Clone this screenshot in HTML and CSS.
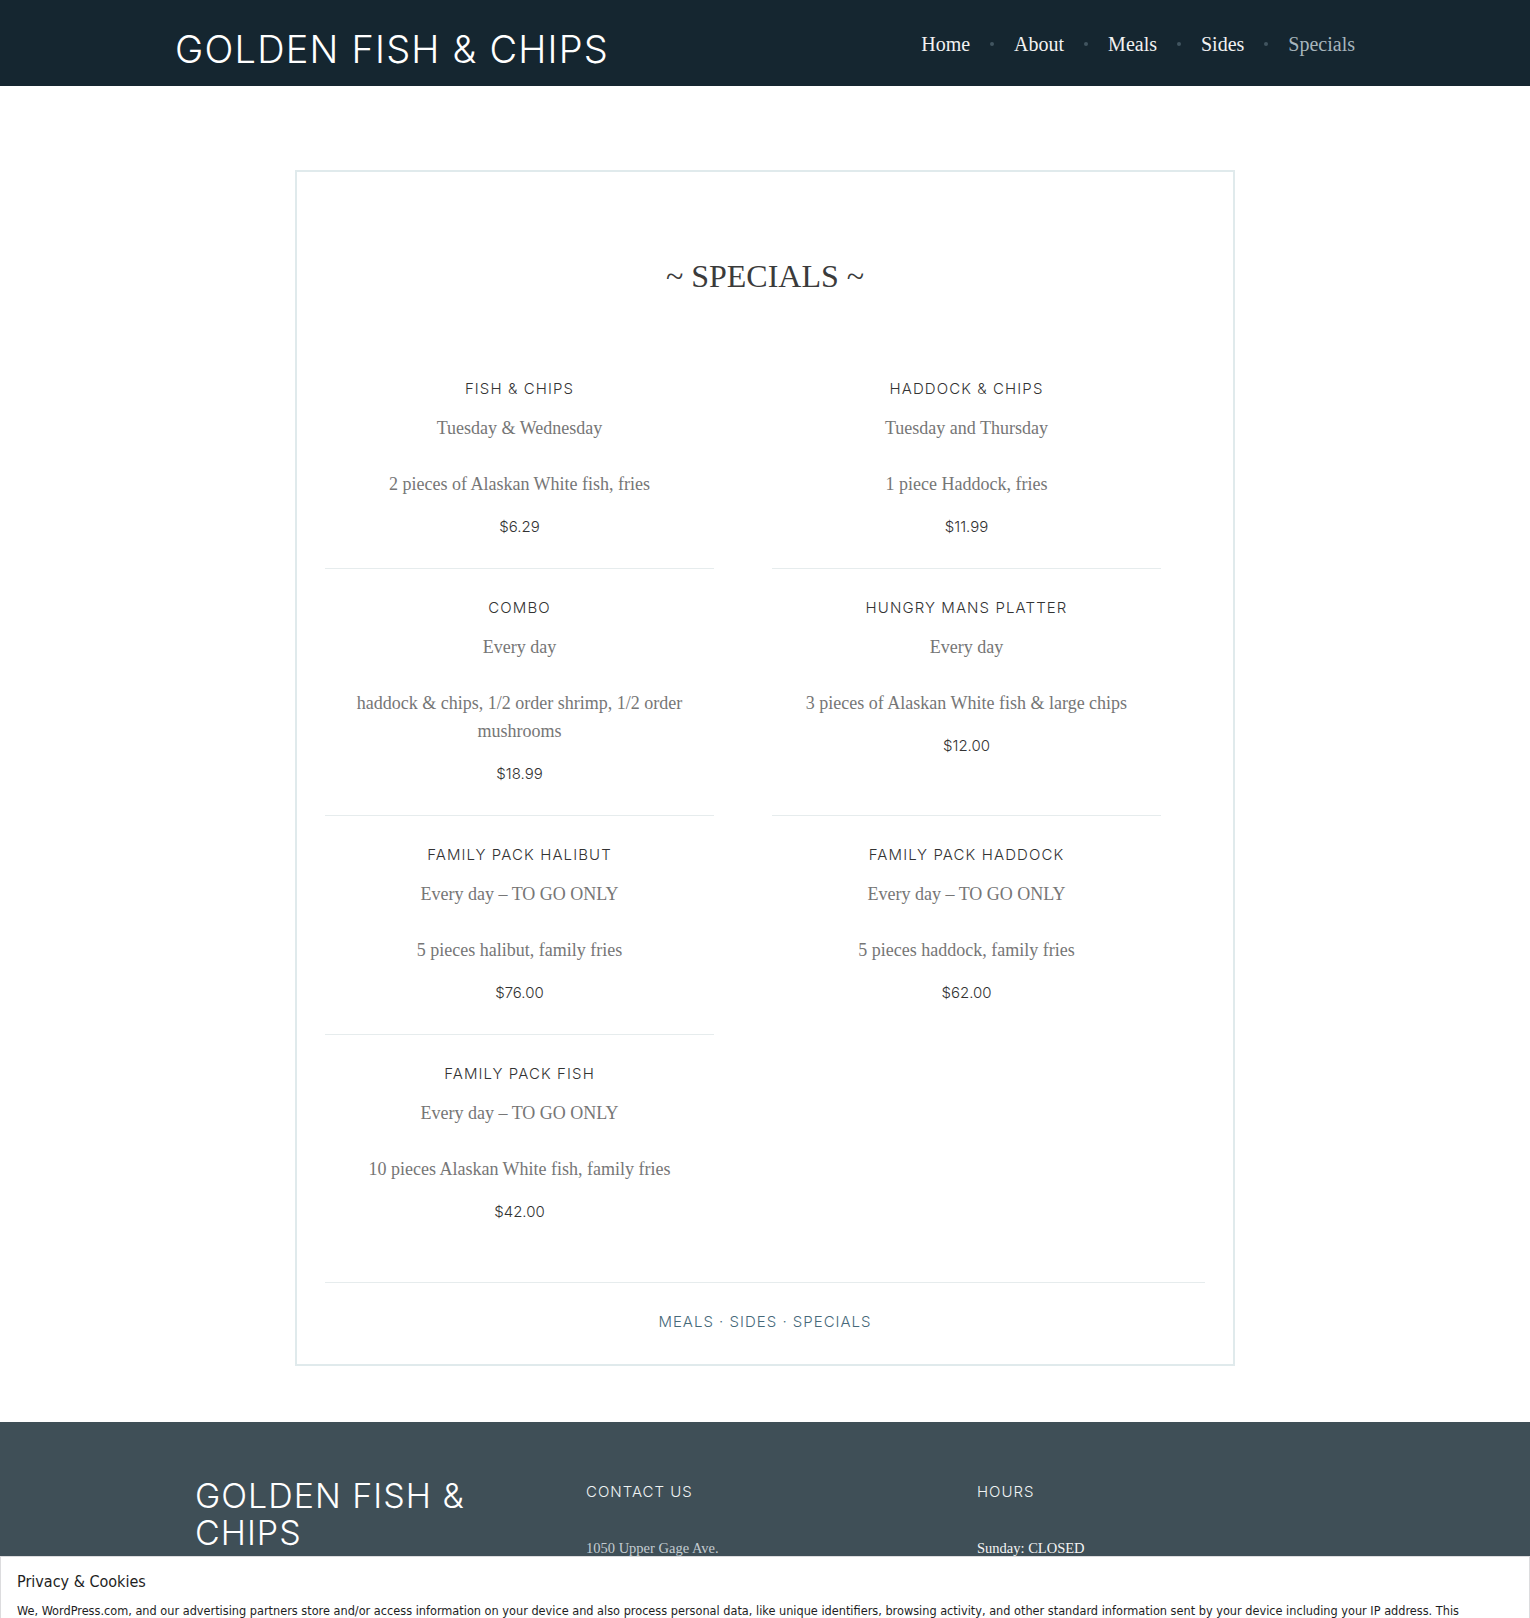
FILE: index.html
```html
<!DOCTYPE html>
<html lang="en">
<head>
<meta charset="utf-8">
<title>Specials – Golden Fish &amp; Chips</title>
<link rel="stylesheet" href="styles.css">
</head>
<body>
<header class="site-header">
  <div class="header-inner">
    <a class="site-title" href="#">GOLDEN FISH &amp; CHIPS</a>
    <nav class="main-nav">
      <ul class="nav-list">
        <li><a href="#">Home</a></li>
        <li class="sep" aria-hidden="true"></li>
        <li><a href="#">About</a></li>
        <li class="sep" aria-hidden="true"></li>
        <li><a href="#">Meals</a></li>
        <li class="sep" aria-hidden="true"></li>
        <li><a href="#">Sides</a></li>
        <li class="sep" aria-hidden="true"></li>
        <li><a class="current" href="#">Specials</a></li>
      </ul>
    </nav>
  </div>
</header>

<main class="content">
  <article class="card">
    <h1 class="entry-title">~ SPECIALS ~</h1>
    <div class="menu-grid">
      <div class="item">
        <h3 class="item-name">FISH &amp; CHIPS</h3>
        <p class="item-days">Tuesday &amp; Wednesday</p>
        <p class="item-desc">2 pieces of Alaskan White fish, fries</p>
        <p class="item-price">$6.29</p>
      </div>
      <div class="item">
        <h3 class="item-name">HADDOCK &amp; CHIPS</h3>
        <p class="item-days">Tuesday and Thursday</p>
        <p class="item-desc">1 piece Haddock, fries</p>
        <p class="item-price">$11.99</p>
      </div>
      <div class="item">
        <h3 class="item-name">COMBO</h3>
        <p class="item-days">Every day</p>
        <p class="item-desc">haddock &amp; chips, 1/2 order shrimp, 1/2 order mushrooms</p>
        <p class="item-price">$18.99</p>
      </div>
      <div class="item">
        <h3 class="item-name">HUNGRY MANS PLATTER</h3>
        <p class="item-days">Every day</p>
        <p class="item-desc">3 pieces of Alaskan White fish &amp; large chips</p>
        <p class="item-price">$12.00</p>
      </div>
      <div class="item">
        <h3 class="item-name">FAMILY PACK HALIBUT</h3>
        <p class="item-days">Every day – TO GO ONLY</p>
        <p class="item-desc">5 pieces halibut, family fries</p>
        <p class="item-price">$76.00</p>
      </div>
      <div class="item item-last">
        <h3 class="item-name">FAMILY PACK HADDOCK</h3>
        <p class="item-days">Every day – TO GO ONLY</p>
        <p class="item-desc">5 pieces haddock, family fries</p>
        <p class="item-price">$62.00</p>
      </div>
      <div class="item item-last">
        <h3 class="item-name">FAMILY PACK FISH</h3>
        <p class="item-days">Every day – TO GO ONLY</p>
        <p class="item-desc">10 pieces Alaskan White fish, family fries</p>
        <p class="item-price">$42.00</p>
      </div>
    </div>
    <footer class="entry-footer">
      <a href="#">MEALS</a> · <a href="#">SIDES</a> · <a href="#">SPECIALS</a>
    </footer>
  </article>
</main>

<footer class="site-footer">
  <div class="footer-inner">
    <div class="footer-col">
      <p class="footer-title">GOLDEN FISH &amp; CHIPS</p>
    </div>
    <div class="footer-col">
      <h4 class="widget-title">CONTACT US</h4>
      <p class="widget-text address">1050 Upper Gage Ave.</p>
    </div>
    <div class="footer-col">
      <h4 class="widget-title">HOURS</h4>
      <p class="widget-text hours">Sunday: CLOSED</p>
    </div>
  </div>
</footer>

<div class="cookie-banner">
  <p class="cookie-title">Privacy &amp; Cookies</p>
  <p class="cookie-text">We, WordPress.com, and our advertising partners store and/or access information on your device and also process personal data, like unique identifiers, browsing activity, and other standard information sent by your device including your IP address. This information is used to show you personalized ads and content, measure ad performance and audience engagement, and to improve our products.</p>
</div>
</body>
</html>
```

FILE: styles.css
```css
html, body {
  margin: 0;
  padding: 0;
}

body {
  background: #ffffff;
  font-family: "Liberation Serif", serif;
  color: #444444;
}

a {
  text-decoration: none;
  color: inherit;
}

/* ---------- Header ---------- */
.site-header {
  background: #152630;
  height: 86px;
}

.header-inner {
  width: 1180px;
  margin: 0 auto;
  display: flex;
  justify-content: space-between;
  align-items: flex-start;
}

.site-title {
  margin-top: 30px;
  font-family: "Inter", "Lato", sans-serif;
  font-weight: 300;
  font-size: 38px;
  line-height: 38px;
  letter-spacing: 1.2px;
  color: #ffffff;
  white-space: nowrap;
}

.main-nav {
  margin-top: 34px;
}

.nav-list {
  list-style: none;
  margin: 0;
  padding: 0;
  display: flex;
  align-items: center;
}

.nav-list a {
  display: block;
  font-family: "Liberation Serif", serif;
  font-size: 20px;
  line-height: 20px;
  color: #f2f2f2;
}

.nav-list a.current {
  color: #a7b5bc;
}

.nav-list .sep {
  width: 4px;
  height: 4px;
  border-radius: 50%;
  background: #415560;
  margin: 0 20px;
}

/* ---------- Card ---------- */
.card {
  width: 940px;
  box-sizing: border-box;
  margin: 84px auto 0;
  border: 2px solid #e0eaec;
  padding: 84px 28px 32px;
}

.entry-title {
  margin: 0 0 54px;
  text-align: center;
  font-family: "Liberation Serif", serif;
  font-weight: 400;
  font-size: 32px;
  line-height: 40px;
  color: #3b3b3b;
}

.menu-grid {
  display: grid;
  grid-template-columns: 389px 389px;
  column-gap: 58px;
}

.item {
  text-align: center;
  padding: 29px 0 27px;
  border-bottom: 1px solid #e6eced;
}

.item-last {
  border-bottom: none;
}

.item-name {
  margin: 0 0 15px;
  font-family: "Inter", "Lato", sans-serif;
  font-weight: 300;
  font-size: 15px;
  line-height: 20px;
  letter-spacing: 1.1px;
  color: #333333;
}

.item-days,
.item-desc {
  font-family: "Liberation Serif", serif;
  font-size: 18px;
  line-height: 28px;
  color: #767676;
}

.item-days {
  margin: 0 0 28px;
}

.item-desc {
  margin: 0 0 15px;
}

.item-price {
  margin: 0;
  font-family: "Inter", "Lato", sans-serif;
  font-weight: 300;
  font-size: 15px;
  line-height: 28px;
  color: #333333;
}

.entry-footer {
  margin-top: 29px;
  border-top: 1px solid #e6eced;
  padding-top: 29px;
  text-align: center;
  font-family: "Inter", "Lato", sans-serif;
  font-weight: 300;
  font-size: 15px;
  line-height: 20px;
  letter-spacing: 1px;
  color: #46697a;
}

/* ---------- Site footer ---------- */
.site-footer {
  margin-top: 56px;
  background: #3f4f57;
  height: 196px;
  overflow: hidden;
}

.footer-inner {
  width: 1140px;
  margin: 0 auto;
  padding-top: 55px;
  display: grid;
  grid-template-columns: repeat(3, 360px);
  column-gap: 31px;
}

.footer-col {
  min-width: 0;
}

.footer-title {
  margin: 0;
  font-family: "Inter", "Lato", sans-serif;
  font-weight: 300;
  font-size: 34px;
  line-height: 37px;
  letter-spacing: 1px;
  color: #ffffff;
}

.widget-title {
  margin: 5px 0 34px;
  font-family: "Inter", "Lato", sans-serif;
  font-weight: 300;
  font-size: 15px;
  line-height: 20px;
  letter-spacing: 1px;
  color: #f0f3f4;
}

.widget-text {
  margin: 0;
  font-family: "Liberation Serif", serif;
  font-size: 14.5px;
  line-height: 24px;
}

.address {
  color: #c3ccd1;
}

.hours {
  color: #f4f4f4;
}

/* ---------- Cookie banner (overlay) ---------- */
.cookie-banner {
  position: fixed;
  left: 0;
  right: 0;
  top: 1556px;
  bottom: 0;
  box-sizing: border-box;
  background: #ffffff;
  border: 1px solid #dcdcde;
  border-bottom: none;
  padding: 0 16px;
  overflow: hidden;
  font-family: "DejaVu Sans Condensed", "Noto Sans", sans-serif;
  font-stretch: condensed;
  color: #1e1e1e;
}

.cookie-title {
  margin: 13px 0 7px;
  font-size: 16px;
  line-height: 24px;
}

.cookie-text {
  margin: 0;
  font-size: 12.6px;
  line-height: 20px;
}
```
